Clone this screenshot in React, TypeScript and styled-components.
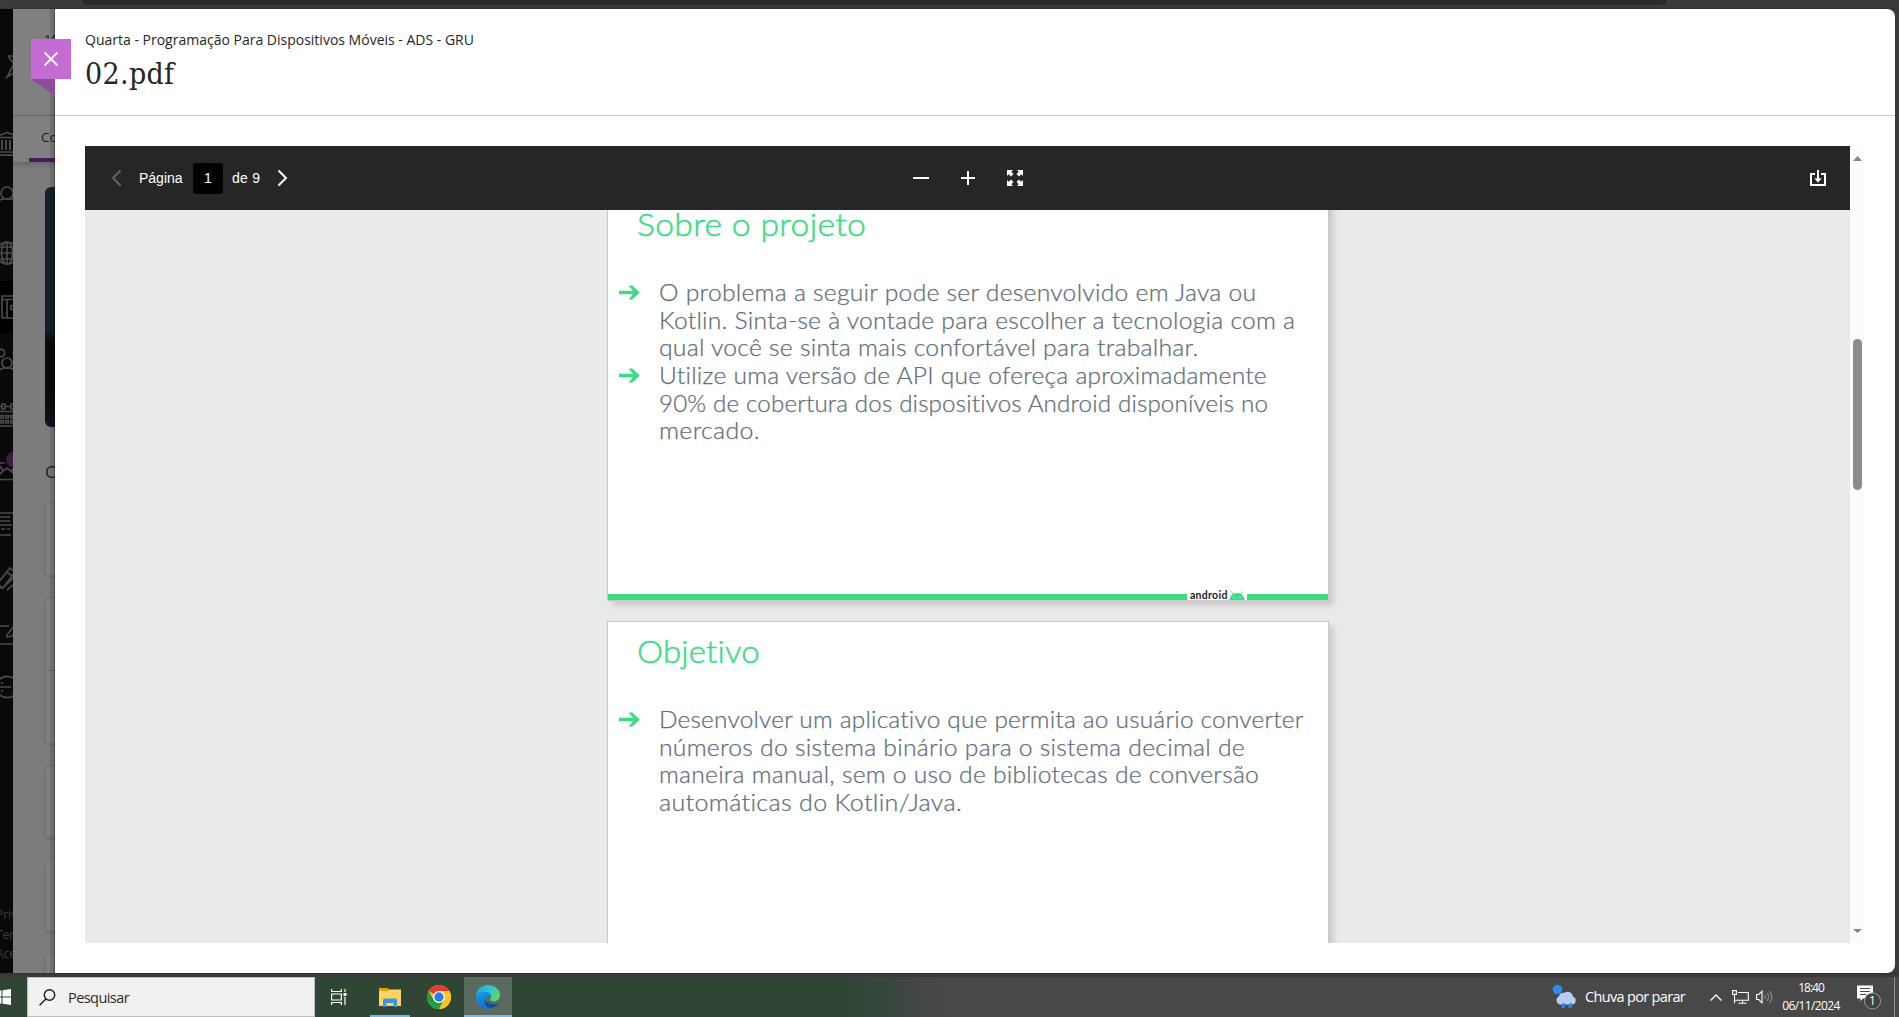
import React, { useLayoutEffect, useRef, useState } from "react";
import styled, { createGlobalStyle, css } from "styled-components";

const UI = `"Open Sans", "Noto Sans", sans-serif`;
const SLIDE = `Lato, "Open Sans", sans-serif`;

const Global = createGlobalStyle`
  *, *::before, *::after { box-sizing: border-box; }
  body { margin: 0; overflow: hidden; font-family: ${UI}; }
  svg { display: block; flex: none; }
  button { border: 0; padding: 0; background: none; font: inherit; color: inherit; }
`;

/* ---------- text that is tracked or widened to an exact width ---------- */

const FitText = styled.span`
  display: inline-block;
  white-space: nowrap;
  transform-origin: 0 50%;
`;

function Fit({ width, widen, children }: { width: number; widen?: boolean; children: string }) {
  const ref = useRef<HTMLSpanElement>(null);
  const [fit, setFit] = useState<React.CSSProperties>({});
  useLayoutEffect(() => {
    if (ref.current) {
      const natural = ref.current.offsetWidth;
      const scale = widen ? 1 + (width / natural - 1) * 0.75 : 1;
      setFit({
        letterSpacing: (width / scale - natural) / children.length,
        transform: widen ? `scaleX(${scale})` : undefined,
      });
    }
  }, [width, widen, children]);
  return (
    <FitText ref={ref} style={fit}>
      {children}
    </FitText>
  );
}

/* ---------- frame ---------- */

const Screen = styled.div`
  width: 1899px;
  height: 1017px;
  overflow: hidden;
  display: grid;
  grid-template-rows: 9px 964px 4px 40px;
  background: #3b3b3b;
`;

const BrowserEdge = styled.div`
  padding: 0 232px 0 82px;
`;

const AddressBar = styled.div`
  height: 5px;
  background: #2b2b2b;
  border-radius: 0 0 9px 9px;
`;

const Stage = styled.main`
  display: grid;
  grid-template-columns: 13px 42px 1840px 4px;
  overflow: hidden;
  box-shadow: 0 0 2px #222;
`;

/* ---------- left rail ---------- */

const Rail = styled.nav`
  background: #090909;
  overflow: hidden;
  display: flex;
  flex-direction: column;
  color: #4b4b4b;
`;

const RailHead = styled.div`
  height: 109px;
  padding-top: 44px;
  flex: none;
`;

const RailList = styled.div`
  display: flex;
  flex-direction: column;
  gap: 2.3px;
  flex: none;
`;

const RailItem = styled.div<{ $active?: boolean }>`
  height: 52px;
  display: flex;
  align-items: center;
  background: ${(p) => (p.$active ? "#000" : "transparent")};
`;

const RailIcon = styled.svg`
  width: 24px;
  height: 24px;
  margin-left: -5px;
  fill: none;
  stroke: currentColor;
  stroke-width: 1.7;
  overflow: visible;
`;

const RailFoot = styled.div`
  margin-top: 192px;
  margin-left: -4px;
  font-size: 12px;
  line-height: 19.6px;
  color: #3d3d3d;
  white-space: nowrap;
`;

const railIcons: { active?: boolean; art: React.ReactNode }[] = [
  { art: <><path d="M0 5 12 0.5 24 5M0 5.500h24M0 20h24M-1 23.200h26" /><path d="M3 8v10M7 8v10M11 8v10M15 8v10M19 8v10" strokeWidth="2" /></> },
  { art: <><circle cx="12" cy="7" r="6" /><path d="M1 17.500c2-2.500 4-4 7-4.500h8c3 .5 5 2 7 4.500" /></> },
  { art: <><circle cx="12" cy="12" r="11" /><ellipse cx="12" cy="12" rx="5.500" ry="11" /><path d="M12 1v22M1 12h22M3 6h18M3 18h18" /></> },
  { active: true, art: <path d="M7 1h20v22H7zM12 4.500v18.500M7 4.500h20M24 10.500h-8v4h8" /> },
  { art: <><circle cx="6" cy="4" r="3.600" /><circle cx="22" cy="4" r="3.600" /><circle cx="12" cy="14" r="5" /><path d="M3 24c1-3 3-4.500 6-5h6c3 .5 5 2 6 5M0 10c2-2 3-2.500 5-2.500" /></> },
  { art: <><path d="M0 3.500h7M10 3.500h6M19 3.500h6M0 8.500h25M0 23h25" /><path d="M7 1v5h3V1zM16 1v5h3V1zM6 12.500h2.500v2.500H6zM11 12.500h2.500v2.500H11zM16 12.500h2.500v2.500H16zM6 17.500h2.500V20H6zM11 17.500h2.500V20H11zM16 17.500h2.500V20H16z" /></> },
  { art: <><path d="M0 5h10M0 21.500h24M5 8l3 5 4-3 4 3 4-4M3 18l5-5M16 13l6 6" /><circle cx="19" cy="1.500" r="8" fill="#3a1d42" stroke="none" /></> },
  { art: <><path d="M0 1h20M3 5h12M5 9h10M0 13h17M6 17h4M12 17h3M0 23h16M19 20v4" /></> },
  { art: <path d="M2 18 15 2l5 4L8 22zM7 23 20 10l4 4L12 24M3 12l-4-4M12 6l5 4M2 18l-1 5 5-1" /> },
  { art: <path d="M0 5h14M0 23h24M12 14l8-10 4 2-7 9-5 1z" /> },
  { art: <><path d="M3 6a11 11 0 0 1 18 0M3 18a11 11 0 0 0 18 0M-2 12h18M1 8l-4 4 4 4" /><path d="M7 7v2M7 15v2" /></> },
];

/* ---------- dimmed course page behind the panel ---------- */

const Course = styled.aside`
  position: relative;
  overflow: hidden;
  background: #7c7c7c;
  color: #1c1c1c;
`;

const CourseHead = styled.div`
  height: 107px;
  padding: 20px 0 0 31px;
  background: #808080;
  border-bottom: 1px solid #6a6a6a;
  font-size: 13px;
  line-height: 20px;
  white-space: nowrap;
`;

const CourseTab = styled.div`
  height: 47px;
  padding: 11px 0 0 28px;
  background: #808080;
  border-bottom: 1px solid #696969;
  box-shadow: 0 2px 6px rgba(0, 0, 0, 0.16);
  font-size: 13.5px;
  line-height: 21px;
  white-space: nowrap;
`;

const TabLine = styled.div`
  margin: 10px 0 0 -12px;
  height: 4px;
  width: 40px;
  background: #4e195c;
`;

const Banner = styled.div`
  margin: 24px 0 0 32px;
  height: 240px;
  border-radius: 6px 0 0 6px;
  background: linear-gradient(#14202b 0, #10202c 60%, #0a0b10 64%, #0b0c12 92%, #0e1724 100%);
`;

const CourseLabel = styled.div`
  margin: 31px 0 17px 32px;
  font-size: 17px;
  line-height: 28px;
  height: 28px;
  white-space: nowrap;
`;

const CourseCard = styled.div<{ $h: number }>`
  height: ${(p) => p.$h}px;
  margin: 0 0 21px 32px;
  border: 1px solid #747474;
  border-right: 0;
  border-radius: 4px 0 0 4px;
  background: #7f7f7f;
  box-shadow: 0 1px 3px rgba(0, 0, 0, 0.14);
`;

const CardSplit = styled.div`
  height: 73px;
  border-bottom: 1px solid #6c6c6c;
`;

const PeekEdge = styled.div`
  position: absolute;
  inset: 0 0 0 auto;
  width: 5px;
  background: rgba(0, 0, 0, 0.12);
  box-shadow: inset -1px 0 1px rgba(0, 0, 0, 0.35);
`;

/* ---------- panel ---------- */

const Panel = styled.section`
  position: relative;
  background: #fff;
  border-radius: 0 8px 8px 0;
  display: flex;
  flex-direction: column;
`;

const CloseTag = styled.button`
  position: absolute;
  left: -24px;
  top: 30px;
  width: 40px;
  height: 40px;
  background: #c46bd4;
  display: grid;
  place-items: center;
  padding-bottom: 1px;
  z-index: 2;
`;

const CloseFold = styled.svg`
  position: absolute;
  left: 0;
  top: 40px;
`;

const PanelHead = styled.header`
  height: 107px;
  padding: 18px 0 0 30px;
  border-bottom: 1px solid #cacaca;
  color: #262626;
  flex: none;
`;

const Crumb = styled.div`
  font-size: 14px;
  line-height: 26px;
  height: 26px;
`;

const FileName = styled.h1`
  margin: 0;
  font: 400 30px/42px "DejaVu Serif Condensed", "DejaVu Serif", serif;
  font-stretch: condensed;
`;

const Viewer = styled.div`
  margin: 30px 30px 30px 30px;
  height: 797px;
  width: 1780px;
  display: grid;
  grid-template-columns: 1765px 15px;
`;

const Document = styled.div`
  display: flex;
  flex-direction: column;
  overflow: hidden;
  background: #e9eaeb;
`;

const Toolbar = styled.div`
  height: 64px;
  flex: none;
  background: #262626;
  color: #fff;
  display: grid;
  grid-template-columns: 802px 1fr auto;
  align-items: center;
  padding: 0 24px 0 26px;
  font: 14px/20px "Liberation Sans", Arial, sans-serif;
  z-index: 1;
`;

const Pager = styled.div`
  display: flex;
  align-items: center;
`;

const PagerText = styled.span<{ $left: number; $width: number }>`
  margin-left: ${(p) => p.$left}px;
  width: ${(p) => p.$width}px;
  white-space: nowrap;
`;

const PageBox = styled.div`
  width: 30px;
  height: 31px;
  border-radius: 3px;
  margin-left: 10px;
  background: #000;
  display: grid;
  place-items: center;
`;

const Zooms = styled.div`
  display: flex;
  align-items: center;
`;

const ToolIcon = styled.svg<{ $gap?: number }>`
  margin-left: ${(p) => p.$gap ?? 0}px;
  fill: none;
  stroke: currentColor;
  stroke-width: 2;
`;

const Pages = styled.div`
  margin: -16px 0 0 522px;
  width: 722px;
  display: flex;
  flex-direction: column;
  gap: 20px;
`;

const Page = styled.article`
  height: 407px;
  flex: none;
  background: #fff;
  border: 1px solid #c6c8ca;
  box-shadow: 5px 5px 5px #d0cccd;
  display: flex;
  flex-direction: column;
  font-family: ${SLIDE};
`;

const SlideTitle = styled.h2`
  margin: 9px 0 0 29px;
  height: 40px;
  font-weight: 300;
  font-size: 32px;
  line-height: 40px;
  color: #3ddc84;
  -webkit-text-stroke: 0.5px #3ddc84;
`;

const Bullets = styled.ul`
  list-style: none;
  margin: 35px 0 0;
  padding: 0 0 0 11px;
  flex: 1;
`;

const Bullet = styled.li`
  display: grid;
  grid-template-columns: 40px 1fr;
  font-weight: 300;
  font-size: 23px;
  line-height: 27.7px;
  color: #5f6e78;
  -webkit-text-stroke: 0.25px #5f6e78;
`;

const BulletLine = styled.div`
  height: 27.7px;
`;

const Arrow = styled.svg`
  margin-top: 6px;
`;

const SlideFoot = styled.footer`
  height: 10px;
  display: flex;
  align-items: flex-end;
`;

const Bar = styled.div<{ $w?: number }>`
  height: 6px;
  background: #3ddc84;
  ${(p) => (p.$w ? css`width: ${p.$w}px;` : css`flex: 1;`)}
`;

const Brand = styled.div`
  width: 60px;
  height: 10px;
  padding: 0 2px 0 3px;
  display: flex;
  align-items: flex-end;
  justify-content: space-between;
  background: #fff;
  color: #222;
  font: 700 10.5px/9px Lato, sans-serif;
`;

const Scroll = styled.div`
  background: #fcfcfc;
  display: flex;
  flex-direction: column;
  align-items: center;
  padding: 10px 0 9px;
`;

const ScrollThumb = styled.div`
  margin-top: 178px;
  margin-bottom: auto;
  width: 9px;
  height: 151px;
  border-radius: 5px;
  background: #8b8b8b;
  transform: translateY(0);
`;

/* ---------- taskbar ---------- */

const Taskbar = styled.footer`
  display: flex;
  background: linear-gradient(90deg, #2f4634 0, #2f4634 840px, #35473a 875px, #454746 925px, #484848 960px);
  color: #fff;
`;

const Start = styled.div`
  width: 27px;
  padding-top: 12px;
`;

const Search = styled.div`
  width: 288px;
  border: 1px solid #bdbdbd;
  background: #f1f1f1;
  color: #2b2b2b;
  display: flex;
  align-items: center;
  gap: 12px;
  padding-left: 11px;
  font-size: 14.5px;
`;

const TaskApp = styled.div<{ $w: number; $active?: boolean; $open?: boolean }>`
  width: ${(p) => p.$w}px;
  display: flex;
  flex-direction: column;
  align-items: center;
  justify-content: center;
  padding-top: 2px;
  border-bottom: 2px solid ${(p) => (p.$open ? "#76b9ed" : "transparent")};
  background-clip: padding-box;
  background-color: ${(p) => (p.$active ? "#596b5e" : "transparent")};
`;

const AppGap = styled.div<{ $w: number }>`
  width: ${(p) => p.$w}px;
`;

const Tray = styled.div`
  margin-left: auto;
  width: 347px;
  display: flex;
  align-items: center;
  border-right: 1px solid #8f8f8f;
  margin-right: 4px;
  height: 40px;
`;

const TrayIcon = styled.svg<{ $gap: number }>`
  margin-left: ${(p) => p.$gap}px;
`;

const Weather = styled.span`
  margin-left: 7px;
  width: 125px;
  font-size: 14.5px;
  line-height: 20px;
`;

const Clock = styled.div`
  width: 60px;
  margin-left: 8px;
  display: flex;
  flex-direction: column;
  align-items: center;
  font-size: 12px;
  line-height: 18px;
  margin-top: -1px;
`;

function SlideArrow() {
  return (
    <Arrow width="21" height="15" viewBox="0 0 21 15" fill="#3ddc84">
      <path d="M0 5.800H14L9.600.800 13 .300 20.800 7.500 13 14.700 9.600 14.200 14 9.200H0z" />
    </Arrow>
  );
}

function AndroidHead() {
  return (
    <svg width="16" height="9" viewBox="0 0 16 9">
      <path d="M.5 9C.8 4.800 3.800 2 8 2s7.200 2.800 7.500 7z" fill="#3ddc84" />
      <path d="M2.300.3l2 3.200M13.700.3l-2 3.200" stroke="#3ddc84" strokeWidth=".9" />
      <circle cx="4.700" cy="6.300" r=".6" fill="#fff" />
      <circle cx="11.300" cy="6.300" r=".6" fill="#fff" />
    </svg>
  );
}

interface Slide {
  title: [string, number];
  items: [string, number][][];
}

const slides: Slide[] = [
  {
    title: ["Sobre o projeto", 229],
    items: [
      [
        ["O problema a seguir pode ser desenvolvido em Java ou", 597],
        ["Kotlin. Sinta-se à vontade para escolher a tecnologia com a", 636],
        ["qual você se sinta mais confortável para trabalhar.", 540],
      ],
      [
        ["Utilize uma versão de API que ofereça aproximadamente", 608],
        ["90% de cobertura dos dispositivos Android disponíveis no", 609],
        ["mercado.", 101],
      ],
    ],
  },
  {
    title: ["Objetivo", 124],
    items: [
      [
        ["Desenvolver um aplicativo que permita ao usuário converter", 645],
        ["números do sistema binário para o sistema decimal de", 586],
        ["maneira manual, sem o uso de bibliotecas de conversão", 600],
        ["automáticas do Kotlin/Java.", 304],
      ],
    ],
  },
];

function SlidePage({ slide }: { slide: Slide }) {
  return (
    <Page>
      <SlideTitle>
        <Fit widen width={slide.title[1]}>{slide.title[0]}</Fit>
      </SlideTitle>
      <Bullets>
        {slide.items.map((lines, i) => (
          <Bullet key={i}>
            <SlideArrow />
            <div>
              {lines.map(([text, w]) => (
                <BulletLine key={text}>
                  <Fit widen width={w}>{text}</Fit>
                </BulletLine>
              ))}
            </div>
          </Bullet>
        ))}
      </Bullets>
      <SlideFoot>
        <Bar $w={579} />
        <Brand>
          <Fit width={38}>android</Fit>
          <AndroidHead />
        </Brand>
        <Bar />
      </SlideFoot>
    </Page>
  );
}

function ExplorerIcon() {
  return (
    <svg width="22" height="19" viewBox="0 0 22 19">
      <path d="M0 0h9l1.500 2H22v7H0z" fill="#e3a209" />
      <path d="M0 3h9l1.500-1.500H22V18H0z" fill="#fcd462" />
      <path d="M4 19v-7q0-1.500 1.500-1.500h11Q18 10.500 18 12v7h-3.500v-4h-7v4z" fill="#3b97dd" />
    </svg>
  );
}

function ChromeIcon() {
  return (
    <svg width="24" height="24" viewBox="0 0 24 24">
      <circle cx="12" cy="12" r="12" fill="#fcc31e" />
      <path d="M12 12 1.600 6A12 12 0 0 1 22.400 6H12z" fill="#e33b2e" />
      <path d="M1.600 6A12 12 0 0 0 12 24l5.200-9L12 12 6.800 15z" fill="#249a46" />
      <path d="M22.400 6H12v6l5.200 3L12 24A12 12 0 0 0 22.400 6z" fill="#fcc31e" />
      <circle cx="12" cy="12" r="6" fill="#fff" />
      <circle cx="12" cy="12" r="4.700" fill="#2f7bea" />
    </svg>
  );
}

function EdgeIcon() {
  return (
    <svg width="24" height="24" viewBox="0 0 24 24">
      <defs>
        <linearGradient id="edgeTop" x1="0" y1="0.300" x2="1" y2="0.700">
          <stop offset="0" stopColor="#27a9e6" />
          <stop offset=".5" stopColor="#2fc6c8" />
          <stop offset="1" stopColor="#62dc52" />
        </linearGradient>
        <linearGradient id="edgeSide" x1="0" y1="0" x2="0.600" y2="1">
          <stop offset="0" stopColor="#1a9bea" />
          <stop offset="1" stopColor="#0d6fce" />
        </linearGradient>
      </defs>
      <path d="M0 11C.5 4.500 5.500 0 12 0c7 0 12 4.700 12 10 0 4-3 6.300-6.500 6.300-2.500 0-4.500-1-3-2.800 1.500-2.500-.5-6-5-6C5 7.500 1.500 9 0 11z" fill="url(#edgeTop)" />
      <path d="M0 11c1.500-3 5-4.200 8.500-4.200 4 0 6.700 2.200 6.500 5.200-3-2-6.500.5-6 4 .5 4 4 6.500 7.500 7A12 12 0 0 1 0 11z" fill="url(#edgeSide)" />
      <path d="M9 14.500c-1.500 4.500 2.500 9 7 8.800 3-1 5.500-3 6.700-5.300-4 2.200-12.200 1.500-13.700-3.500z" fill="#114d96" />
    </svg>
  );
}

export default function App() {
  return (
    <Screen>
      <Global />
      <BrowserEdge>
        <AddressBar />
      </BrowserEdge>

      <Stage>
        <Rail>
          <RailHead>
            <RailIcon viewBox="0 0 24 24">
              <path d="M13 3h14M13 3l6 8-7 13 12-7" />
            </RailIcon>
          </RailHead>
          <RailList>
            {railIcons.map((r, i) => (
              <RailItem key={i} $active={r.active}>
                <RailIcon viewBox="0 0 24 24">{r.art}</RailIcon>
              </RailItem>
            ))}
          </RailList>
          <RailFoot>
            Priv
            <br />
            Ter
            <br />
            Ace
          </RailFoot>
        </Rail>

        <Course>
          <CourseHead>10</CourseHead>
          <CourseTab>
            Co
            <TabLine />
          </CourseTab>
          <Banner />
          <CourseLabel>C</CourseLabel>
          <CourseCard $h={73} />
          <CourseCard $h={147}>
            <CardSplit />
          </CourseCard>
          <CourseCard $h={73} />
          <CourseCard $h={73} />
          <CourseCard $h={73} />
          <PeekEdge />
        </Course>

        <Panel>
          <CloseTag aria-label="Fechar">
            <svg width="16" height="16" viewBox="0 0 16 16" stroke="#fff" strokeWidth="1.800">
              <path d="M1.500 1.500l13 13M14.500 1.500l-13 13" />
            </svg>
            <CloseFold width="24" height="17" viewBox="0 0 24 17">
              <path d="M0 0h24v17z" fill="#8e4b9b" />
            </CloseFold>
          </CloseTag>
          <PanelHead>
            <Crumb>
              <Fit width={389}>Quarta - Programação Para Dispositivos Móveis - ADS - GRU</Fit>
            </Crumb>
            <FileName>
              <Fit width={89}>02.pdf</Fit>
            </FileName>
          </PanelHead>
          <Viewer>
            <Document>
              <Toolbar>
                <Pager>
                  <ToolIcon width="11" height="18" viewBox="0 0 11 18" color="#646464">
                    <path d="M9.500 1.500 2 9l7.500 7.500" />
                  </ToolIcon>
                  <PagerText $left={17} $width={44}>
                    <Fit width={44}>Página</Fit>
                  </PagerText>
                  <PageBox>1</PageBox>
                  <PagerText $left={9} $width={29}>
                    <Fit width={28}>de 9</Fit>
                  </PagerText>
                  <ToolIcon $gap={16} width="11" height="18" viewBox="0 0 11 18" strokeWidth="2.200">
                    <path d="M1.500 1.500 9 9l-7.500 7.500" />
                  </ToolIcon>
                </Pager>
                <Zooms>
                  <ToolIcon width="16" height="16" viewBox="0 0 16 16">
                    <path d="M0 8h16" />
                  </ToolIcon>
                  <ToolIcon $gap={32} width="14" height="14" viewBox="0 0 14 14">
                    <path d="M0 7h14M7 0v14" />
                  </ToolIcon>
                  <ToolIcon $gap={32} width="16" height="16" viewBox="0 0 16 16">
                    <path d="M0 0h6L4.300 1.700 6.500 4 4 6.500 1.700 4.300 0 6zM16 0v6l-1.700-1.700L12 6.500 9.500 4l2.200-2.300L10 0zM16 16h-6l1.700-1.700L9.500 12 12 9.500l2.300 2.200L16 10zM0 16v-6l1.700 1.700L4 9.500 6.500 12l-2.200 2.300L6 16z" fill="#fff" stroke="none" />
                  </ToolIcon>
                </Zooms>
                <ToolIcon width="16" height="16" viewBox="0 0 16 16">
                  <path d="M5 4H1v11h14V4h-4M8 0v10" />
                  <path d="M5 8.700h6l-3 3.600z" fill="#fff" strokeWidth="0.600" />
                </ToolIcon>
              </Toolbar>
              <Pages>
                {slides.map((s) => (
                  <SlidePage key={s.title[0]} slide={s} />
                ))}
              </Pages>
            </Document>
            <Scroll>
              <svg width="9" height="5" viewBox="0 0 9 5">
                <path d="M0 5 4.500 0 9 5z" fill="#858585" />
              </svg>
              <ScrollThumb />
              <svg width="9" height="5" viewBox="0 0 9 5">
                <path d="M0 0h9L4.500 4z" fill="#858585" />
              </svg>
            </Scroll>
          </Viewer>
        </Panel>
      </Stage>

      <div />

      <Taskbar>
        <Start>
          <svg width="11" height="16" viewBox="0 0 11 16" fill="#fff">
            <path d="M0 1.500 1.500 1.300V7.500H0zM2.500 1.200 11 0v7.500H2.500zM0 8.500h1.500v6.200L0 14.500zM2.500 8.500H11V16l-8.500-1.200z" />
          </svg>
        </Start>
        <Search>
          <svg width="17" height="17" viewBox="0 0 17 17" fill="none" stroke="#1c1c1c" strokeWidth="1.400">
            <circle cx="10.500" cy="6" r="5.200" />
            <path d="M6.800 9.900.600 16.300" />
          </svg>
          <Fit width={61}>Pesquisar</Fit>
        </Search>
        <TaskApp $w={47}>
          <svg width="16" height="16" viewBox="0 0 16 16" fill="none" stroke="#fff" strokeWidth="1.200">
            <path d="M.6 0v2.500h9.800V0M.6 5h9.800v6H.6zM.6 16v-2.500h9.800V16M14 0v3M14 8v8" />
            <path d="M12.500 4h3v3h-3z" fill="#fff" stroke="none" />
          </svg>
        </TaskApp>
        <AppGap $w={8} />
        <TaskApp $w={40} $open>
          <ExplorerIcon />
        </TaskApp>
        <AppGap $w={4} />
        <TaskApp $w={50}>
          <ChromeIcon />
        </TaskApp>
        <TaskApp $w={48} $open $active>
          <EdgeIcon />
        </TaskApp>
        <Tray>
          <TrayIcon $gap={4} width="26" height="26" viewBox="0 0 26 26">
            <circle cx="5.500" cy="5.500" r="4.800" fill="#2b8cf5" />
            <path d="M8 20.500a4.200 4.200 0 0 1-1-8 4 4 0 0 1 5-3.500 5.500 5.500 0 0 1 9 3.500 4.200 4.200 0 0 1-.5 8z" fill="#b7cdf5" />
            <path d="M12 18.500c2 3 1.500 6-1 6s-2.500-3 1-6zM19 18.500c2 3 1.500 6-1 6s-2.500-3 1-6z" fill="#2583f0" />
          </TrayIcon>
          <Weather>
            <Fit width={100}>Chuva por parar</Fit>
          </Weather>
          <TrayIcon $gap={0} width="12" height="7" viewBox="0 0 12 7" fill="none" stroke="#fff" strokeWidth="1.300">
            <path d="M.6 6.500 6 1l5.400 5.500" />
          </TrayIcon>
          <TrayIcon $gap={10} width="17" height="14" viewBox="0 0 17 14" fill="none" stroke="#fff" strokeWidth="1.100">
            <path d="M6 2.500h10.300v7.800H3M10.500 10.300v2.900M6.500 13.200h8M.6.600h3.800v3.800H.6zM2.500 4.400v8.800" />
          </TrayIcon>
          <TrayIcon $gap={7} width="17" height="14" viewBox="0 0 17 14" fill="none" stroke="#fff" strokeWidth="1.100">
            <path d="M.6 4.500h2.200L6 1.200v11.600L2.800 9.500H.6z" />
            <g stroke="#8d8d8d">
              <path d="M8.500 5q1.500 2 0 4M11 3q3 4 0 8M13.500 1.200q4.500 5.800 0 11.600" />
            </g>
          </TrayIcon>
          <Clock>
            <Fit width={26}>18:40</Fit>
            <Fit width={58}>06/11/2024</Fit>
          </Clock>
          <TrayIcon $gap={16} width="25" height="25" viewBox="0 0 25 25">
            <path d="M0 .5h16v13H6L3.500 16v-2.500H0z" fill="#fff" />
            <path d="M3 3.500h10M3 6.500h10M3 9.500h6" stroke="#484848" strokeWidth="1.200" />
            <circle cx="15.500" cy="16" r="8" fill="#424242" stroke="#9a9a9a" strokeWidth="1" />
            <text x="15.500" y="20.300" fill="#fff" fontSize="12" fontFamily="Open Sans" textAnchor="middle">1</text>
          </TrayIcon>
        </Tray>
      </Taskbar>
    </Screen>
  );
}
